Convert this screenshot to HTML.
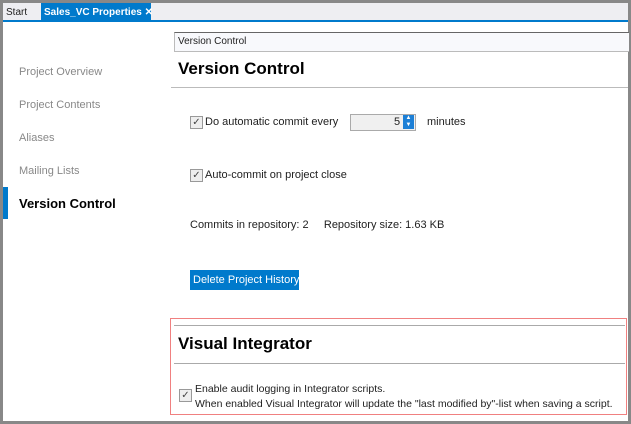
<!DOCTYPE html>
<html><head><style>
body{margin:0;width:631px;height:424px;overflow:hidden;background:#888;font-family:"Liberation Sans",sans-serif;position:relative}
.a{position:absolute}
.t{font-size:11px;color:#1e1e1e;white-space:nowrap}
.cb{position:absolute;width:11px;height:11px;border:1px solid #999;background:#eee;font-size:10px;line-height:11px;text-align:center;color:#444}
.nav{position:absolute;left:19px;font-size:11px;color:#888}
</style></head><body>
<div class="a" style="left:3px;top:3px;width:625px;height:418px;background:#fff"></div>
<div class="a" style="left:3px;top:3px;width:625px;height:18px;background:#eeeef2"></div>
<div class="a t" style="left:6px;top:7px;font-size:10px">Start</div>
<div class="a" style="left:41px;top:3px;width:110px;height:18px;background:#007acc"></div>
<div class="a t" style="left:44px;top:7px;font-size:10px;color:#fff;font-weight:bold">Sales_VC Properties ✕</div>
<div class="a" style="left:3px;top:20px;width:625px;height:2px;background:#007acc"></div>
<div class="a" style="left:174px;top:32px;width:454px;height:18px;background:#f8f9fc;border-top:1px solid #666;border-bottom:1px solid #bbb;border-left:1px solid #bbb"></div>
<div class="a t" style="left:178px;top:36px;font-size:10px">Version Control</div>
<div class="a" style="left:178px;top:59px;font-size:17px;font-weight:bold;color:#000">Version Control</div>
<div class="a" style="left:171px;top:87px;width:457px;height:1px;background:#bbb"></div>
<div class="nav" style="top:66px">Project Overview</div>
<div class="nav" style="top:99px">Project Contents</div>
<div class="nav" style="top:132px">Aliases</div>
<div class="nav" style="top:165px">Mailing Lists</div>
<div class="a" style="left:3px;top:187px;width:5px;height:32px;background:#007acc"></div>
<div class="a" style="left:19px;top:196px;font-size:13px;font-weight:bold;color:#000">Version Control</div>
<div class="cb" style="left:190px;top:116px">✓</div>
<div class="a t" style="left:205px;top:116px">Do automatic commit every</div>
<div class="a" style="left:350px;top:114px;width:64px;height:15px;border:1px solid #aaa;background:#f0f0f0"></div>
<div class="a t" style="left:394px;top:116px">5</div>
<div class="a" style="left:403px;top:115px;width:11px;height:14px;background:#1c7fd6;color:#fff;font-size:6px;line-height:7px;text-align:center">▲<br>▼</div>
<div class="a t" style="left:427px;top:116px">minutes</div>
<div class="cb" style="left:190px;top:169px">✓</div>
<div class="a t" style="left:205px;top:169px">Auto-commit on project close</div>
<div class="a t" style="left:190px;top:219px">Commits in repository: 2&nbsp;&nbsp;&nbsp;&nbsp;&nbsp;Repository size: 1.63 KB</div>
<div class="a" style="left:190px;top:270px;width:109px;height:20px;background:#007acc"></div>
<div class="a t" style="left:193px;top:274px;color:#fff">Delete Project History</div>
<div class="a" style="left:170px;top:318px;width:455px;height:95px;border:1px solid #f08080"></div>
<div class="a" style="left:174px;top:325px;width:451px;height:1px;background:#aaa"></div>
<div class="a" style="left:178px;top:334px;font-size:17px;font-weight:bold;color:#000">Visual Integrator</div>
<div class="a" style="left:174px;top:363px;width:451px;height:1px;background:#aaa"></div>
<div class="cb" style="left:179px;top:389px">✓</div>
<div class="a t" style="left:195px;top:383px;font-size:10.5px">Enable audit logging in Integrator scripts.</div>
<div class="a t" style="left:195px;top:398px;font-size:10.5px">When enabled Visual Integrator will update the "last modified by"-list when saving a script.</div>
</body></html>
